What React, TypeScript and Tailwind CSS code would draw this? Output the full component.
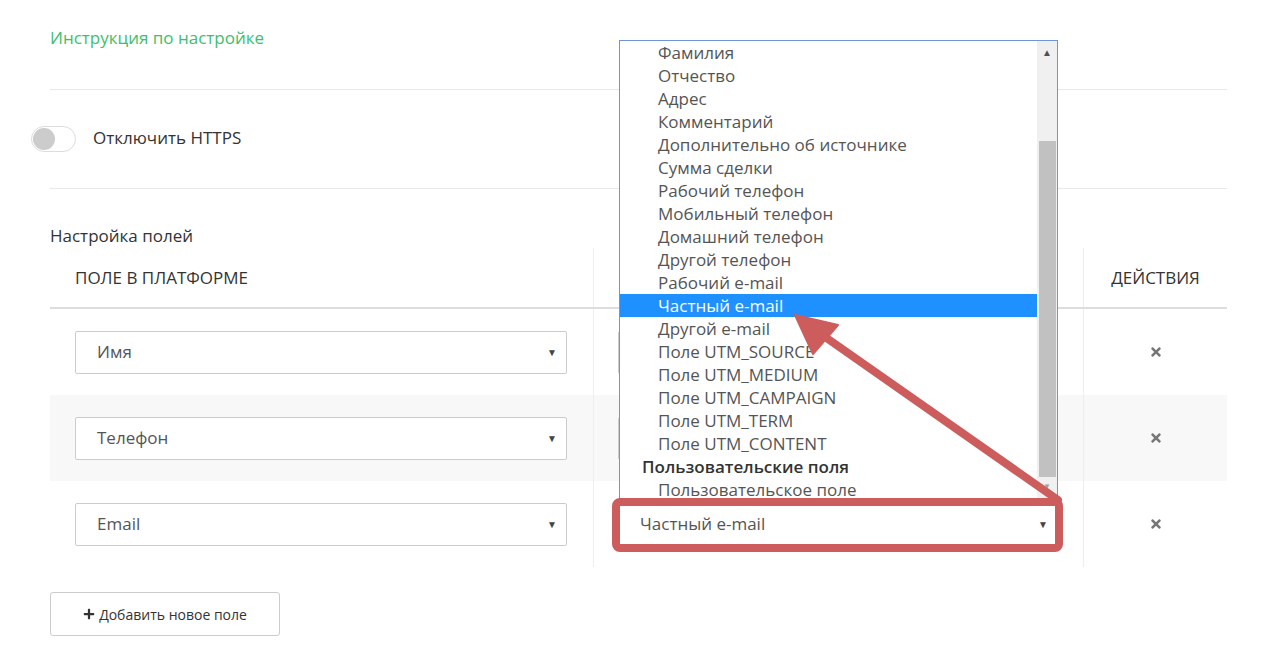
import { FaTimes, FaPlus } from 'react-icons/fa';

const font = { fontFamily: '"Open Sans", "Noto Sans", sans-serif' };

const crmOptions = [
  'Фамилия',
  'Отчество',
  'Адрес',
  'Комментарий',
  'Дополнительно об источнике',
  'Сумма сделки',
  'Рабочий телефон',
  'Мобильный телефон',
  'Домашний телефон',
  'Другой телефон',
  'Рабочий e-mail',
  'Частный e-mail',
  'Другой e-mail',
  'Поле UTM_SOURCE',
  'Поле UTM_MEDIUM',
  'Поле UTM_CAMPAIGN',
  'Поле UTM_TERM',
  'Поле UTM_CONTENT',
];

// the CRM column of the first two rows sits under the open list, so its values are left blank
const rows = [
  { platform: 'Имя', crm: '', striped: false },
  { platform: 'Телефон', crm: '', striped: true },
  { platform: 'Email', crm: 'Частный e-mail', striped: false, open: true },
];

function SelectBox({ value }: { value: string }) {
  return (
    <div className="flex h-[43px] items-center justify-between rounded-[2px] border border-[#ccc] bg-white pl-[21px] pr-[9px]">
      <span className="text-[17px] text-[#555]">{value}</span>
      <span className="text-[10px] text-[#444]">▼</span>
    </div>
  );
}

function OptionsList() {
  return (
    <div className="absolute bottom-full left-px right-0 mb-px flex h-[462px] border border-[#7293d6] bg-white">
      <div className="flex flex-1 flex-col overflow-hidden">
        {crmOptions.map((o) => (
          <div
            key={o}
            className={
              o === 'Частный e-mail'
                ? 'h-[23px] shrink-0 bg-[#1e90ff] pl-[38px] text-[17px] leading-[23px] text-white'
                : 'h-[23px] shrink-0 pl-[38px] text-[17px] leading-[23px] text-[#555]'
            }
          >
            {o}
          </div>
        ))}
        <div className="h-[23px] shrink-0 pl-[22px] text-[17px] font-semibold leading-[23px] text-[#333]">
          Пользовательские поля
        </div>
        <div className="h-[23px] shrink-0 pl-[38px] text-[17px] leading-[23px] text-[#555]">
          Пользовательское поле
        </div>
      </div>
      {/* scrollbar */}
      <div className="flex w-[20px] flex-col items-center bg-[#f0f0f0]">
        <span className="mt-[6px] text-[10px] leading-none text-[#505050]">▲</span>
        <div className="mt-[84px] h-[336px] w-[17px] bg-[#c1c1c1]" />
        <span className="mt-[5px] text-[8px] leading-none text-[#a0a0a0]">▼</span>
      </div>
    </div>
  );
}

export default function App() {
  return (
    <div className="relative h-[654px] w-[1273px] overflow-hidden bg-white text-[#333]" style={font}>
      <div className="pl-[50px] pr-[46px]">
        <div className="flex h-[89px] items-start pt-[25px]">
          <a className="text-[17px] text-[#3cc06e]">Инструкция по настройке</a>
        </div>

        <div className="flex h-[99px] items-center border-t border-[#e8e8e8]">
          <div className="-ml-[19px] flex h-[26px] w-[45px] items-center rounded-full border border-[#ddd] bg-white px-[1px]">
            <div className="h-[22px] w-[22px] rounded-full bg-[#ccc]" />
          </div>
          <span className="ml-[17px] -mt-[3px] text-[17px] font-medium text-[#333]">Отключить HTTPS</span>
        </div>

        <div className="border-t border-[#e8e8e8] pt-[35px]">
          <div className="text-[17px] leading-[23px] text-[#333]">Настройка полей</div>

          <div className="mt-[1px]">
            <div className="flex h-[61px] border-b-2 border-[#ddd] text-[17px] font-medium uppercase text-[#333]">
              <div className="flex w-[543px] items-center pl-[25px]">Поле в платформе</div>
              <div className="w-[490px] border-l border-[#eee]" />
              <div className="flex flex-1 items-center justify-center border-l border-[#eee]">Действия</div>
            </div>

            {rows.map((r) => (
              <div key={r.platform} className={r.striped ? 'flex h-[86px] bg-[#f8f8f8]' : 'flex h-[86px]'}>
                <div className="flex w-[543px] items-center pl-[25px] pr-[26px]">
                  <div className="flex-1">
                    <SelectBox value={r.platform} />
                  </div>
                </div>
                <div className="flex w-[490px] items-center border-l border-[#eee] pl-[24px] pr-[25px]">
                  <div className="relative flex-1">
                    {r.open && <OptionsList />}
                    <SelectBox value={r.crm} />
                  </div>
                </div>
                <div className="flex flex-1 items-center justify-center border-l border-[#eee]">
                  <FaTimes className="h-[14px] w-[14px] text-[#777]" />
                </div>
              </div>
            ))}
          </div>

          <button className="mt-[25px] flex h-[44px] w-[230px] items-center justify-center gap-[4px] rounded-[3px] border border-[#ccc] bg-white text-[14px] text-[#333]">
            <FaPlus className="h-[12px] w-[12px]" />
            Добавить новое поле
          </button>
        </div>
      </div>

      {/* annotation: box around the email mapping and arrow to the picked option */}
      <svg className="pointer-events-none absolute left-0 top-0" width="1273" height="654">
        <rect x="616" y="502" width="443" height="46" rx="4" fill="none" stroke="#cd5c5c" strokeWidth="8" />
        <line x1="1058" y1="500" x2="818" y2="332" stroke="#cd5c5c" strokeWidth="8" strokeLinecap="round" />
        <polygon points="795,315 838,325 813,354" fill="#cd5c5c" stroke="#cd5c5c" strokeWidth="2" strokeLinejoin="round" />
      </svg>
    </div>
  );
}
